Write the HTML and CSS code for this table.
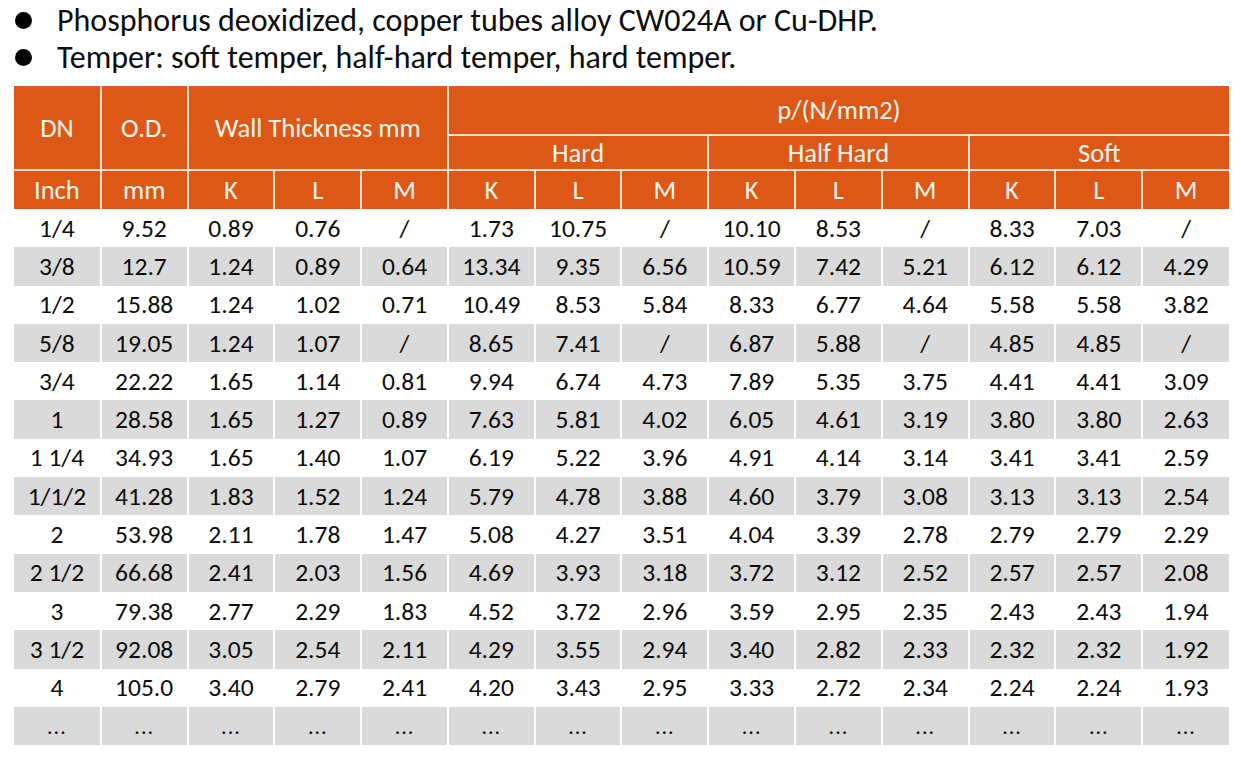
FILE: index.html
```html
<!DOCTYPE html>
<html lang="en">
<head>
<meta charset="utf-8">
<title>Copper tubes</title>
<link rel="stylesheet" href="styles.css">
</head>
<body>
<ul class="notes">
  <li>Phosphorus deoxidized, copper tubes alloy CW024A or Cu-DHP.</li>
  <li>Temper: soft temper, half-hard temper, hard temper.</li>
</ul>
<table class="spec">
  <colgroup>
    <col><col><col><col><col><col><col><col><col><col><col><col><col><col>
  </colgroup>
  <thead>
    <tr class="h1">
      <th rowspan="2">DN</th>
      <th rowspan="2">O.D.</th>
      <th rowspan="2" colspan="3">Wall Thickness mm</th>
      <th colspan="9">p/(N/mm2)</th>
    </tr>
    <tr class="h2">
      <th colspan="3">Hard</th>
      <th colspan="3">Half Hard</th>
      <th colspan="3">Soft</th>
    </tr>
    <tr class="h3">
      <th>Inch</th><th>mm</th>
      <th>K</th><th>L</th><th>M</th>
      <th>K</th><th>L</th><th>M</th>
      <th>K</th><th>L</th><th>M</th>
      <th>K</th><th>L</th><th>M</th>
    </tr>
  </thead>
  <tbody>
    <tr><td>1/4</td><td>9.52</td><td>0.89</td><td>0.76</td><td>/</td><td>1.73</td><td>10.75</td><td>/</td><td>10.10</td><td>8.53</td><td>/</td><td>8.33</td><td>7.03</td><td>/</td></tr>
    <tr><td>3/8</td><td>12.7</td><td>1.24</td><td>0.89</td><td>0.64</td><td>13.34</td><td>9.35</td><td>6.56</td><td>10.59</td><td>7.42</td><td>5.21</td><td>6.12</td><td>6.12</td><td>4.29</td></tr>
    <tr><td>1/2</td><td>15.88</td><td>1.24</td><td>1.02</td><td>0.71</td><td>10.49</td><td>8.53</td><td>5.84</td><td>8.33</td><td>6.77</td><td>4.64</td><td>5.58</td><td>5.58</td><td>3.82</td></tr>
    <tr><td>5/8</td><td>19.05</td><td>1.24</td><td>1.07</td><td>/</td><td>8.65</td><td>7.41</td><td>/</td><td>6.87</td><td>5.88</td><td>/</td><td>4.85</td><td>4.85</td><td>/</td></tr>
    <tr><td>3/4</td><td>22.22</td><td>1.65</td><td>1.14</td><td>0.81</td><td>9.94</td><td>6.74</td><td>4.73</td><td>7.89</td><td>5.35</td><td>3.75</td><td>4.41</td><td>4.41</td><td>3.09</td></tr>
    <tr><td>1</td><td>28.58</td><td>1.65</td><td>1.27</td><td>0.89</td><td>7.63</td><td>5.81</td><td>4.02</td><td>6.05</td><td>4.61</td><td>3.19</td><td>3.80</td><td>3.80</td><td>2.63</td></tr>
    <tr><td>1 1/4</td><td>34.93</td><td>1.65</td><td>1.40</td><td>1.07</td><td>6.19</td><td>5.22</td><td>3.96</td><td>4.91</td><td>4.14</td><td>3.14</td><td>3.41</td><td>3.41</td><td>2.59</td></tr>
    <tr><td>1/1/2</td><td>41.28</td><td>1.83</td><td>1.52</td><td>1.24</td><td>5.79</td><td>4.78</td><td>3.88</td><td>4.60</td><td>3.79</td><td>3.08</td><td>3.13</td><td>3.13</td><td>2.54</td></tr>
    <tr><td>2</td><td>53.98</td><td>2.11</td><td>1.78</td><td>1.47</td><td>5.08</td><td>4.27</td><td>3.51</td><td>4.04</td><td>3.39</td><td>2.78</td><td>2.79</td><td>2.79</td><td>2.29</td></tr>
    <tr><td>2 1/2</td><td>66.68</td><td>2.41</td><td>2.03</td><td>1.56</td><td>4.69</td><td>3.93</td><td>3.18</td><td>3.72</td><td>3.12</td><td>2.52</td><td>2.57</td><td>2.57</td><td>2.08</td></tr>
    <tr><td>3</td><td>79.38</td><td>2.77</td><td>2.29</td><td>1.83</td><td>4.52</td><td>3.72</td><td>2.96</td><td>3.59</td><td>2.95</td><td>2.35</td><td>2.43</td><td>2.43</td><td>1.94</td></tr>
    <tr><td>3 1/2</td><td>92.08</td><td>3.05</td><td>2.54</td><td>2.11</td><td>4.29</td><td>3.55</td><td>2.94</td><td>3.40</td><td>2.82</td><td>2.33</td><td>2.32</td><td>2.32</td><td>1.92</td></tr>
    <tr><td>4</td><td>105.0</td><td>3.40</td><td>2.79</td><td>2.41</td><td>4.20</td><td>3.43</td><td>2.95</td><td>3.33</td><td>2.72</td><td>2.34</td><td>2.24</td><td>2.24</td><td>1.93</td></tr>
    <tr class="more"><td>...</td><td>...</td><td>...</td><td>...</td><td>...</td><td>...</td><td>...</td><td>...</td><td>...</td><td>...</td><td>...</td><td>...</td><td>...</td><td>...</td></tr>
  </tbody>
</table>
</body>
</html>
```

FILE: styles.css
```css
html, body {
  margin: 0;
  padding: 0;
  background: #ffffff;
}

body {
  font-family: Carlito, Lato, "Open Sans", sans-serif;
  color: #0d0d0d;
}

.notes {
  list-style: none;
  margin: 0;
  padding: 2px 0 0 15px;
  height: 86px;
  box-sizing: border-box;
}

.notes li {
  display: flex;
  align-items: center;
  height: 37px;
  font-size: 32px;
  line-height: 37px;
  color: #0d0d0d;
}

.notes li::before {
  content: "";
  width: 17px;
  height: 17px;
  border-radius: 50%;
  background: #000000;
  margin-right: 25px;
  flex: none;
}

.spec {
  margin-left: 14px;
  width: 1215px;
  table-layout: fixed;
  border-collapse: collapse;
  text-align: center;
}

.spec th {
  background: #dd5716;
  color: #fff7ef;
  font-weight: normal;
  font-size: 26.5px;
  border: 2px solid #f9e2cf;
  padding: 0;
}

.spec tr.h1 th:first-child,
.spec tr.h3 th:first-child {
  border-left: none;
}

.spec tr.h1 th:last-child,
.spec tr.h2 th:last-child,
.spec tr.h3 th:last-child {
  border-right: none;
}

.spec tr.h1 th {
  border-top: none;
}

.spec tr.h1 {
  height: 49px;
}

.spec tr.h2 {
  height: 35px;
}

.spec tr.h3 {
  height: 39px;
}

.spec tr.h3 th {
  border-bottom: none;
}

.spec td {
  font-size: 25.5px;
  height: 38.3px;
  padding: 0;
  border-left: 2px solid #ffffff;
  border-right: 2px solid #ffffff;
  white-space: nowrap;
}

.spec td:first-child {
  border-left: none;
}

.spec td:last-child {
  border-right: none;
}

.spec tbody tr:nth-child(even) td {
  background: #dadada;
}

.spec tr.more td {
  font-size: 22px;
  letter-spacing: 1px;
}
```
